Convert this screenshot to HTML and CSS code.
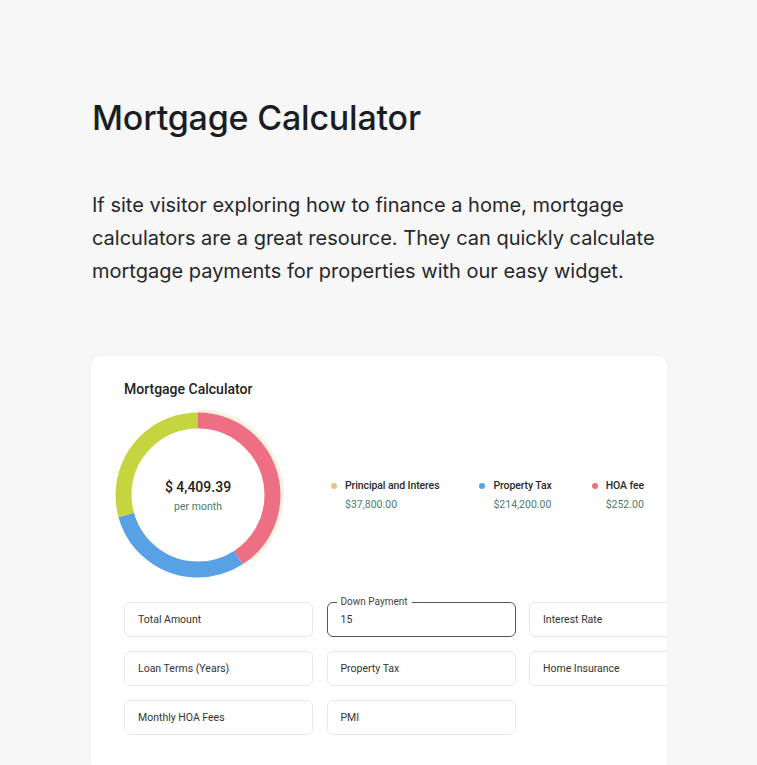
FILE: index.html
```html
<!DOCTYPE html>
<html lang="en">
<head>
<meta charset="utf-8">
<title>Mortgage Calculator</title>
<link rel="stylesheet" href="styles.css">
</head>
<body>
<main class="page">
  <h1 class="title">Mortgage Calculator</h1>
  <p class="lead">If site visitor exploring how to finance a home, mortgage calculators are a great resource. They can quickly calculate mortgage payments for properties with our easy widget.</p>

  <section class="card">
    <h2 class="card-title">Mortgage Calculator</h2>
    <div class="summary">
      <div class="donut">
        <svg width="172" height="172" viewBox="0 0 172 172">
          <g transform="rotate(-90 86 86)" fill="none">
            <circle cx="86" cy="86" r="84" stroke="#fbf1e1" stroke-width="4" stroke-dasharray="206 600"/>
            <circle cx="86" cy="86" r="74.5" stroke="#ee6f84" stroke-width="16" stroke-dasharray="191.1 468.1" stroke-dashoffset="0"/>
            <circle cx="86" cy="86" r="74.5" stroke="#58a1e4" stroke-width="16" stroke-dasharray="139.1 468.1" stroke-dashoffset="-191.1"/>
            <circle cx="86" cy="86" r="74.5" stroke="#c6d53f" stroke-width="16" stroke-dasharray="137.9 468.1" stroke-dashoffset="-330.2"/>
          </g>
        </svg>
        <div class="donut-center">
          <div class="amount">$ 4,409.39</div>
          <div class="per">per month</div>
        </div>
      </div>
      <ul class="legend">
        <li class="legend-item">
          <span class="dot dot-yellow"></span>
          <div><div class="legend-label">Principal and Interes</div><div class="legend-value">$37,800.00</div></div>
        </li>
        <li class="legend-item">
          <span class="dot dot-blue"></span>
          <div><div class="legend-label">Property Tax</div><div class="legend-value">$214,200.00</div></div>
        </li>
        <li class="legend-item">
          <span class="dot dot-red"></span>
          <div><div class="legend-label">HOA fee</div><div class="legend-value">$252.00</div></div>
        </li>
      </ul>
    </div>

    <div class="fields">
      <div class="field">Total Amount</div>
      <div class="field field-active"><span class="float-label">Down Payment</span>15</div>
      <div class="field">Interest Rate</div>
      <div class="field">Loan Terms (Years)</div>
      <div class="field">Property Tax</div>
      <div class="field">Home Insurance</div>
      <div class="field">Monthly HOA Fees</div>
      <div class="field">PMI</div>
    </div>
  </section>
</main>
</body>
</html>
```

FILE: styles.css
```css
* { box-sizing: border-box; }
html, body {
  margin: 0;
  padding: 0;
  background: #f7f7f7;
  height: 765px;
  overflow: hidden;
}
.page {
  padding: 96px 0 0 92px;
  font-family: Inter, "Open Sans", sans-serif;
  color: #1b1d24;
}
.title {
  margin: 0;
  font-size: 34px;
  font-weight: 500;
  line-height: 44px;
  letter-spacing: -0.2px;
}
.lead {
  margin: 49px 0 0 0;
  width: 590px;
  font-size: 20px;
  line-height: 33px;
  color: #25272c;
  letter-spacing: 0;
}
.card {
  margin-top: 68px;
  margin-left: -1px;
  width: 576px;
  height: 409px;
  background: #fff;
  border-radius: 10px 10px 0 0;
  overflow: hidden;
  padding: 24px 0 0 33px;
  font-family: Roboto, "Liberation Sans", sans-serif;
  box-shadow: 0 0 6px rgba(0,0,0,0.03);
}
.card-title {
  margin: 0;
  font-size: 14px;
  font-weight: 500;
  line-height: 18px;
  color: #222;
}
.summary {
  display: flex;
  align-items: center;
  margin-top: 11px;
}
.donut {
  position: relative;
  width: 172px;
  height: 172px;
  margin-left: -12px;
}
.donut svg { display: block; }
.donut-center {
  position: absolute;
  inset: 0;
  display: flex;
  flex-direction: column;
  align-items: center;
  justify-content: center;
}
.amount {
  font-size: 14px;
  font-weight: 500;
  color: #222;
  line-height: 18px;
  margin-top: 0;
}
.per {
  font-size: 10.5px;
  color: #4d7a6b;
  margin-top: 4px;
}
.legend {
  list-style: none;
  margin: 0 0 0 47px;
  padding: 0;
  display: flex;
  gap: 40px;
}
.legend-item {
  display: flex;
  align-items: flex-start;
  gap: 8px;
}
.dot {
  width: 6px;
  height: 6px;
  border-radius: 50%;
  margin-top: 4px;
}
.dot-yellow { background: #e8c76d; }
.dot-blue { background: #58a1e4; }
.dot-red { background: #ee6f84; }
.legend-label {
  font-size: 10.5px;
  font-weight: 500;
  color: #2a2a2a;
  line-height: 14px;
  letter-spacing: -0.1px;
}
.legend-value {
  font-size: 10.5px;
  color: #4d7a6b;
  line-height: 14px;
  margin-top: 5px;
}
.fields {
  display: grid;
  grid-template-columns: 189px 189px 189px;
  grid-auto-rows: 35px;
  column-gap: 13.5px;
  row-gap: 14px;
  margin-top: 21px;
}
.field {
  position: relative;
  border: 1px solid #e7e7e7;
  border-radius: 6px;
  display: flex;
  align-items: center;
  padding-left: 13px;
  font-size: 10.5px;
  color: #333;
}
.field-active {
  border-color: #555;
}
.float-label {
  position: absolute;
  left: 9px;
  top: -7px;
  padding: 0 4px;
  background: #fff;
  font-size: 10px;
  line-height: 12px;
  color: #444;
}
```
